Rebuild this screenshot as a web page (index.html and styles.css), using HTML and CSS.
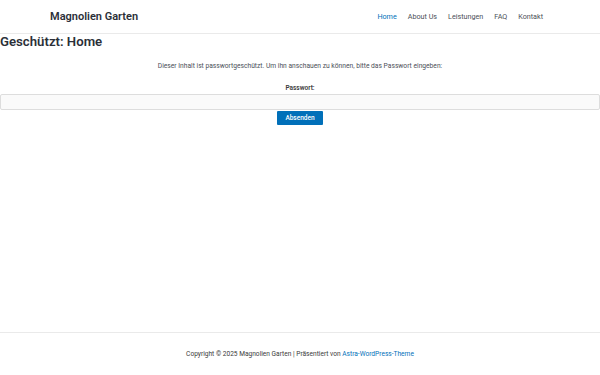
FILE: index.html
```html
<!DOCTYPE html>
<html lang="de">
<head>
    <meta charset="UTF-8">
    <meta name="viewport" content="width=device-width, initial-scale=1.0">
    <title>Geschützt: Home – Magnolien Garten</title>
    <link rel="stylesheet" href="styles.css">
</head>
<body>
    <header class="site-header">
        <div class="header-inner">
            <a class="site-title" href="#">Magnolien Garten</a>
            <nav class="main-nav">
                <a href="#" class="current">Home</a>
                <a href="#">About Us</a>
                <a href="#">Leistungen</a>
                <a href="#">FAQ</a>
                <a href="#">Kontakt</a>
            </nav>
        </div>
    </header>

    <main class="content">
        <h1 class="entry-title">Geschützt: Home</h1>
        <form class="post-password-form" onsubmit="return false">
            <p class="intro">Dieser Inhalt ist passwortgeschützt. Um ihn anschauen zu können, bitte das Passwort eingeben:</p>
            <label for="pwbox" class="pw-label">Passwort:</label>
            <input type="password" id="pwbox" name="post_password">
            <button type="submit">Absenden</button>
        </form>
    </main>

    <footer class="site-footer">
        <p>Copyright © 2025 Magnolien Garten | Präsentiert von <a href="#">Astra-WordPress-Theme</a></p>
    </footer>
</body>
</html>
```

FILE: styles.css
```css
* {
    box-sizing: border-box;
    margin: 0;
    padding: 0;
}

body {
    font-family: Roboto, 'Liberation Sans', sans-serif;
    color: #3a3a3a;
    background: #fff;
    min-height: 100vh;
    display: flex;
    flex-direction: column;
}

a {
    text-decoration: none;
    color: inherit;
}

.site-header {
    border-bottom: 1px solid #eaeaea;
}

.header-inner {
    height: 33px;
    padding: 0 57px 0 50px;
    display: flex;
    align-items: center;
    justify-content: space-between;
}

.site-title {
    font-size: 11px;
    font-weight: 600;
    color: #2b2f38;
}

.main-nav {
    display: flex;
    gap: 11px;
    font-size: 7.2px;
    color: #4b4f58;
}

.main-nav .current {
    color: #0170b9;
}

.content {
    flex: 1;
}

.entry-title {
    font-size: 13.2px;
    font-weight: 600;
    color: #2b2f38;
    line-height: 16px;
}

.post-password-form {
    display: flex;
    flex-direction: column;
    align-items: center;
}

.intro {
    font-size: 6.7px;
    color: #4b4f58;
    margin-top: 12px;
}

.pw-label {
    font-size: 6.5px;
    font-weight: 600;
    color: #3a3a3a;
    margin-top: 14px;
}

.post-password-form input {
    width: 100%;
    height: 16px;
    margin-top: 2px;
    border: 1px solid #dddddd;
    border-radius: 2px;
    background: #fafafa;
}

.post-password-form button {
    margin-top: 1px;
    width: 46px;
    height: 14px;
    background: #0170b9;
    color: #fff;
    border: none;
    border-radius: 1px;
    font-family: inherit;
    font-size: 6.5px;
    font-weight: 500;
    cursor: pointer;
}

.site-footer {
    border-top: 1px solid #eaeaea;
    height: 43px;
    display: flex;
    align-items: center;
    justify-content: center;
    font-size: 6.6px;
    color: #3a3a3a;
}

.site-footer a {
    color: #0170b9;
}
```
